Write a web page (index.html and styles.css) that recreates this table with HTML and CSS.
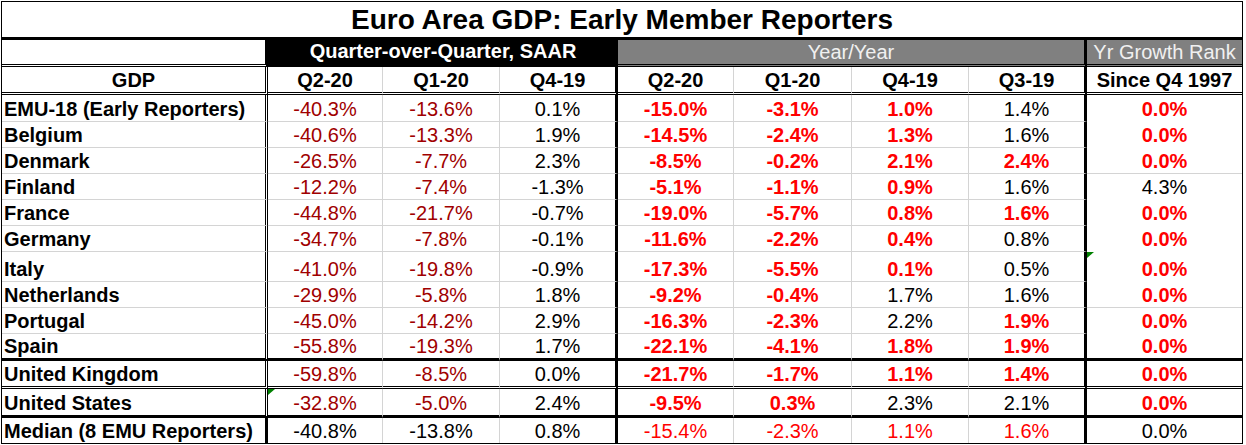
FILE: index.html
```html
<!DOCTYPE html>
<html lang="en">
<head>
<meta charset="utf-8">
<title>Euro Area GDP: Early Member Reporters</title>
<link rel="stylesheet" href="styles.css">
</head>
<body>
<div class="sheet">
  <div class="row title-row">
    <div class="c title">Euro Area GDP: Early Member Reporters</div>
  </div>
  <div class="row h1">
    <div class="c blank"></div>
    <div class="c qoq">Quarter-over-Quarter, SAAR</div>
    <div class="c yoy">Year/Year</div>
    <div class="c rank">Yr Growth Rank</div>
  </div>
  <div class="row h2">
    <div class="c b dr">GDP</div>
    <div class="c b gr">Q2-20</div>
    <div class="c b gr">Q1-20</div>
    <div class="c b tr">Q4-19</div>
    <div class="c b gr">Q2-20</div>
    <div class="c b gr">Q1-20</div>
    <div class="c b gr">Q4-19</div>
    <div class="c b tr">Q3-19</div>
    <div class="c b">Since Q4 1997</div>
  </div>

  <div class="row data first nr">
    <div class="c lab dr">EMU-18 (Early Reporters)</div>
    <div class="c dk gr">-40.3%</div><div class="c dk gr">-13.6%</div><div class="c tr">0.1%</div>
    <div class="c rb gr">-15.0%</div><div class="c rb gr">-3.1%</div><div class="c rb gr">1.0%</div><div class="c tr">1.4%</div>
    <div class="c rb">0.0%</div>
  </div>
  <div class="row data nr">
    <div class="c lab dr">Belgium</div>
    <div class="c dk gr">-40.6%</div><div class="c dk gr">-13.3%</div><div class="c tr">1.9%</div>
    <div class="c rb gr">-14.5%</div><div class="c rb gr">-2.4%</div><div class="c rb gr">1.3%</div><div class="c tr">1.6%</div>
    <div class="c rb">0.0%</div>
  </div>
  <div class="row data">
    <div class="c lab dr">Denmark</div>
    <div class="c dk gr">-26.5%</div><div class="c dk gr">-7.7%</div><div class="c tr">2.3%</div>
    <div class="c rb gr">-8.5%</div><div class="c rb gr">-0.2%</div><div class="c rb gr">2.1%</div><div class="c rb tr">2.4%</div>
    <div class="c rb">0.0%</div>
  </div>
  <div class="row data nr">
    <div class="c lab dr">Finland</div>
    <div class="c dk gr">-12.2%</div><div class="c dk gr">-7.4%</div><div class="c tr">-1.3%</div>
    <div class="c rb gr">-5.1%</div><div class="c rb gr">-1.1%</div><div class="c rb gr">0.9%</div><div class="c tr">1.6%</div>
    <div class="c">4.3%</div>
  </div>
  <div class="row data nr">
    <div class="c lab dr">France</div>
    <div class="c dk gr">-44.8%</div><div class="c dk gr">-21.7%</div><div class="c tr">-0.7%</div>
    <div class="c rb gr">-19.0%</div><div class="c rb gr">-5.7%</div><div class="c rb gr">0.8%</div><div class="c rb tr">1.6%</div>
    <div class="c rb">0.0%</div>
  </div>
  <div class="row data nr">
    <div class="c lab dr">Germany</div>
    <div class="c dk gr">-34.7%</div><div class="c dk gr">-7.8%</div><div class="c tr">-0.1%</div>
    <div class="c rb gr">-11.6%</div><div class="c rb gr">-2.2%</div><div class="c rb gr">0.4%</div><div class="c tr">0.8%</div>
    <div class="c rb">0.0%</div>
  </div>
  <div class="row data tall nr">
    <div class="c lab dr">Italy</div>
    <div class="c dk gr">-41.0%</div><div class="c dk gr">-19.8%</div><div class="c tr">-0.9%</div>
    <div class="c rb gr">-17.3%</div><div class="c rb gr">-5.5%</div><div class="c rb gr">0.1%</div><div class="c tr">0.5%</div>
    <div class="c rb note">0.0%</div>
  </div>
  <div class="row data">
    <div class="c lab dr">Netherlands</div>
    <div class="c dk gr">-29.9%</div><div class="c dk gr">-5.8%</div><div class="c tr">1.8%</div>
    <div class="c rb gr">-9.2%</div><div class="c rb gr">-0.4%</div><div class="c gr">1.7%</div><div class="c tr">1.6%</div>
    <div class="c rb">0.0%</div>
  </div>
  <div class="row data nr">
    <div class="c lab dr">Portugal</div>
    <div class="c dk gr">-45.0%</div><div class="c dk gr">-14.2%</div><div class="c tr">2.9%</div>
    <div class="c rb gr">-16.3%</div><div class="c rb gr">-2.3%</div><div class="c gr">2.2%</div><div class="c rb tr">1.9%</div>
    <div class="c rb">0.0%</div>
  </div>
  <div class="row data thick spain">
    <div class="c lab dr">Spain</div>
    <div class="c dk gr">-55.8%</div><div class="c dk gr">-19.3%</div><div class="c tr">1.7%</div>
    <div class="c rb gr">-22.1%</div><div class="c rb gr">-4.1%</div><div class="c rb gr">1.8%</div><div class="c rb tr">1.9%</div>
    <div class="c rb">0.0%</div>
  </div>
  <div class="row data dbl uk">
    <div class="c lab dr">United Kingdom</div>
    <div class="c dk gr">-59.8%</div><div class="c dk gr">-8.5%</div><div class="c tr">0.0%</div>
    <div class="c rb gr">-21.7%</div><div class="c rb gr">-1.7%</div><div class="c rb gr">1.1%</div><div class="c rb tr">1.4%</div>
    <div class="c rb">0.0%</div>
  </div>
  <div class="row data thick us">
    <div class="c lab dr">United States</div>
    <div class="c dk gr note">-32.8%</div><div class="c dk gr">-5.0%</div><div class="c tr">2.4%</div>
    <div class="c rb gr">-9.5%</div><div class="c rb gr">0.3%</div><div class="c gr">2.3%</div><div class="c tr">2.1%</div>
    <div class="c rb">0.0%</div>
  </div>
  <div class="row data last">
    <div class="c lab trs">Median (8 EMU Reporters)</div>
    <div class="c gr">-40.8%</div><div class="c gr">-13.8%</div><div class="c tr">0.8%</div>
    <div class="c r gr">-15.4%</div><div class="c r gr">-2.3%</div><div class="c r gr">1.1%</div><div class="c r tr">1.6%</div>
    <div class="c">0.0%</div>
  </div>
</div>
</body>
</html>
```

FILE: styles.css
```css
html, body {
  margin: 0;
  padding: 0;
  background: #ffffff;
}

body {
  padding: 1px 0 0 1px;
  font-family: "Liberation Sans", Arial, sans-serif;
  color: #000000;
}

.sheet {
  box-sizing: border-box;
  width: 1242px;
  border: 1px solid #000000;
  background: #ffffff;
}

.row {
  display: grid;
  grid-template-columns: 266px 115px 117px 118px 116px 118px 117px 118px 155px;
}

.c {
  box-sizing: border-box;
  display: flex;
  align-items: flex-end;
  justify-content: center;
  font-size: 20px;
  line-height: 23px;
  white-space: nowrap;
  overflow: hidden;
  position: relative;
}

/* title */
.title-row { height: 38px; }
.title {
  grid-column: 1 / -1;
  align-items: center;
  font-size: 28px;
  font-weight: bold;
  line-height: 32px;
  border-bottom: 3px solid #000000;
}

/* header row 1 */
.h1 { height: 27px; }
.h1 > .c { border-bottom: 3px double #000000; }
.h1 .blank { border-right: 3px solid #000000; }
.h1 .qoq {
  grid-column: span 3;
  background: #000000;
  color: #ffffff;
  font-weight: bold;
  padding-bottom: 1px;
}
.h1 .yoy {
  grid-column: span 4;
  background: #808080;
  color: #f0f0f0;
  border-right: 3px solid #000000;
}
.h1 .rank {
  background: #808080;
  color: #f0f0f0;
}

/* header row 2 */
.h2 { height: 28px; }
.h2 > .c { border-bottom: 3px double #000000; }

/* data rows */
.data { height: 26px; }
.data.first { height: 27px; }
.data.tall { height: 30px; }
.data.spain { height: 27px; }
.data.uk { height: 28px; }
.data.us { height: 29px; }
.data.last { height: 25px; }

.data > .c { border-bottom: 1px solid #d4d4d4; }
.data.nr > .c:last-child { border-bottom-color: #ffffff; }
.data.thick > .c { border-bottom: 3px solid #000000; }
.data.dbl > .c { border-bottom: 3px double #000000; }
.data.last > .c { border-bottom: none; }

/* vertical rules */
.gr { border-right: 1px solid #d4d4d4; }
.tr { border-right: 3px solid #000000; }
.trs { border-right: 3px solid #000000; }
.dr { border-right: 3px double #000000; }

/* text styles */
.b { font-weight: bold; }
.lab {
  justify-content: flex-start;
  padding-left: 2px;
  font-weight: bold;
}
.dk { color: #a00000; }
.rb { color: #ff0000; font-weight: bold; }
.r { color: #ff0000; }

/* comment indicator triangle */
.note::before {
  content: "";
  position: absolute;
  left: 0;
  top: 0;
  width: 0;
  height: 0;
  border-top: 6px solid #008000;
  border-right: 7px solid transparent;
}
```
